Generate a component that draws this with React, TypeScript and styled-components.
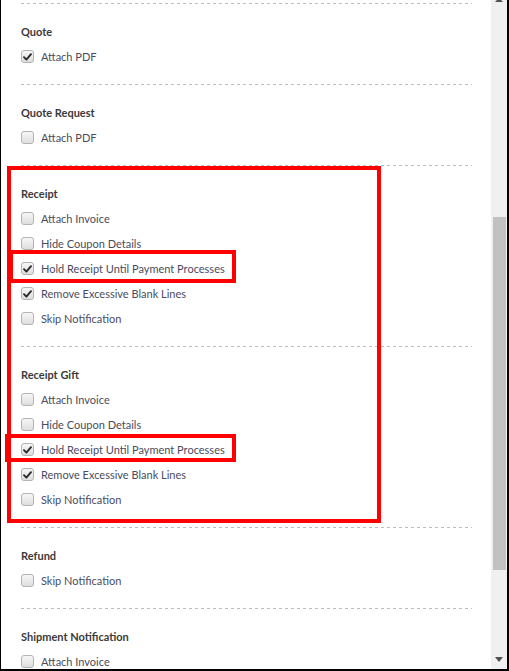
import styled, { createGlobalStyle } from 'styled-components';

type Option = { label: string; checked?: boolean };
type Section = { title: string; options: Option[] };

const receiptOptions: Option[] = [
  { label: 'Attach Invoice' },
  { label: 'Hide Coupon Details' },
  { label: 'Hold Receipt Until Payment Processes', checked: true },
  { label: 'Remove Excessive Blank Lines', checked: true },
  { label: 'Skip Notification' },
];

const sections: Section[] = [
  { title: 'Quote', options: [{ label: 'Attach PDF', checked: true }] },
  { title: 'Quote Request', options: [{ label: 'Attach PDF' }] },
  { title: 'Receipt', options: receiptOptions },
  { title: 'Receipt Gift', options: receiptOptions },
  { title: 'Refund', options: [{ label: 'Skip Notification' }] },
  { title: 'Shipment Notification', options: [{ label: 'Attach Invoice' }, { label: 'Skip Notification' }] },
];

const Tick = () => (
  <svg width="9" height="8" viewBox="0 0 9 8">
    <path d="M1 4.2 L3.4 6.6 L8 1.2" fill="none" stroke="#2b2b2b" strokeWidth="1.9" strokeLinecap="round" strokeLinejoin="round" />
  </svg>
);

const App = () => {
  return (
    <>
      <GlobalStyle />
      <Frame>
        <Content>
          <Dash />
          {sections.map((section) => (
            <div key={section.title}>
              <SectionBody>
                <Title>{section.title}</Title>
                {section.options.map((opt) => (
                  <Row key={opt.label}>
                    <Box checked={!!opt.checked}>{opt.checked && <Tick />}</Box>
                    <Label>{opt.label}</Label>
                  </Row>
                ))}
              </SectionBody>
              <Dash />
            </div>
          ))}
          <Highlight $left={7} $top={166} $width={374} $height={357} />
          <Highlight $left={9} $top={250} $width={227} $height={33} />
          <Highlight $left={5} $top={434} $width={231} $height={28} />
        </Content>
        <Scrollbar>
          <UpArrow />
          <Thumb />
          <DownArrow />
        </Scrollbar>
      </Frame>
    </>
  );
};

const GlobalStyle = createGlobalStyle`
  html, body {
    margin: 0;
    padding: 0;
    background: #fff;
    overflow: hidden;
  }
  body {
    font-family: 'Lato', 'Open Sans', sans-serif;
  }
`;

const Frame = styled.div`
  display: flex;
  width: 509px;
  height: 671px;
  box-sizing: border-box;
  border-left: 1px solid #000;
  border-right: 2px solid #000;
  border-bottom: 2px solid #000;
  background: #fff;
  overflow: hidden;
`;

const Content = styled.div`
  position: relative;
  flex: 1;
  padding: 3px 19px 0 20px;
  overflow: hidden;
`;

const Dash = styled.div`
  height: 1px;
  background: repeating-linear-gradient(to right, #bdbdbd 0 3px, transparent 3px 6px);
`;

const SectionBody = styled.div`
  display: flex;
  flex-direction: column;
  padding: 15px 0 15px;
`;

const Title = styled.div`
  height: 25px;
  display: flex;
  align-items: center;
  font-size: 11px;
  font-weight: 700;
  color: #3a3a3a;
`;

const Row = styled.div`
  height: 25px;
  display: flex;
  align-items: center;
  gap: 7px;
`;

const Box = styled.span<{ checked: boolean }>`
  width: 13px;
  height: 13px;
  box-sizing: border-box;
  display: flex;
  align-items: center;
  justify-content: center;
  border: 1px solid #b3b3b3;
  border-radius: 3px;
  background: linear-gradient(#f6f6f6, #dedede);
`;

const Label = styled.span`
  font-size: 11px;
  color: #4a4c5e;
`;

const Highlight = styled.div<{ $left: number; $top: number; $width: number; $height: number }>`
  position: absolute;
  left: ${(p) => p.$left - 1}px;
  top: ${(p) => p.$top}px;
  width: ${(p) => p.$width}px;
  height: ${(p) => p.$height}px;
  box-sizing: border-box;
  border: 4px solid #ff0000;
  pointer-events: none;
`;

const Scrollbar = styled.div`
  width: 16px;
  display: flex;
  flex-direction: column;
  align-items: center;
  background: #f0f0f0;
`;

const UpArrow = styled.div`
  width: 0;
  height: 0;
  margin-top: -2px;
  border-left: 4px solid transparent;
  border-right: 4px solid transparent;
  border-bottom: 4px solid #505050;
`;

const Thumb = styled.div`
  width: 13px;
  height: 353px;
  margin-top: 215px;
  background: #c1c1c1;
`;

const DownArrow = styled.div`
  width: 0;
  height: 0;
  margin-top: 87px;
  border-left: 4px solid transparent;
  border-right: 4px solid transparent;
  border-top: 5px solid #505050;
`;

export default App;
